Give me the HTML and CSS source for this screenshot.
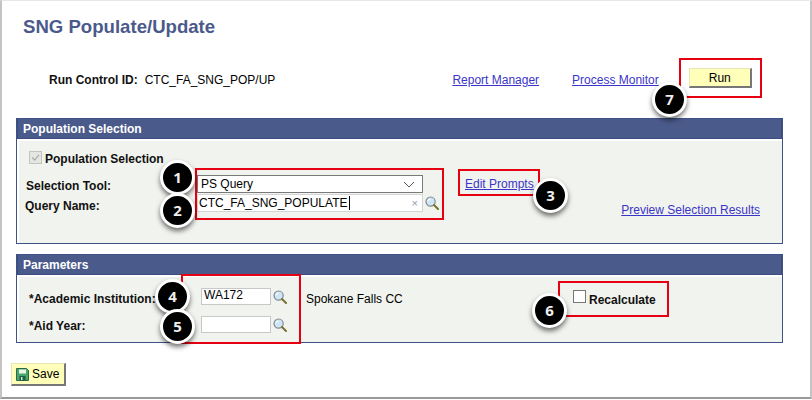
FILE: index.html
```html
<!DOCTYPE html>
<html lang="en">
<head>
<meta charset="utf-8">
<title>SNG Populate/Update</title>
<link rel="stylesheet" href="styles.css">
</head>
<body>
<svg class="defs" width="0" height="0" aria-hidden="true">
  <symbol id="lens" viewBox="0 0 14 14">
    <circle cx="5.6" cy="5.6" r="4.6" fill="#cfe5f6" stroke="#7f8a8f" stroke-width="1.2"/>
    <path d="M3 5.2A3 3 0 0 1 5.4 3" fill="none" stroke="#fff" stroke-width="1.2"/>
    <path d="M9 9l4 4" stroke="#77722c" stroke-width="2" stroke-linecap="round"/>
  </symbol>
</svg>
<main class="window">
  <h1 class="title">SNG Populate/Update</h1>
  <div class="run-row">
    <span class="label run-label low-2">Run Control ID:</span>
    <span class="run-id low-2">CTC_FA_SNG_POP/UP</span>
    <a class="link report-link low-2" href="#">Report Manager</a>
    <a class="link monitor-link low-2" href="#">Process Monitor</a>
    <button class="btn run-btn" type="button">Run</button>
  </div>

  <section class="panel panel-pop">
    <h2 class="panel-head">Population Selection</h2>
    <div class="panel-body pop-body">
      <div class="check-row">
        <span class="check check-on"><svg viewBox="0 0 13 13" width="11" height="11"><path d="M2.5 6.5l3 3 5-6" fill="none" stroke="#a9aca9" stroke-width="1.4"/></svg></span>
        <span class="label low-1">Population Selection</span>
      </div>
      <div class="field-row tool-row">
        <span class="label tool-label low-2">Selection Tool:</span>
        <div class="select">
          <span>PS Query</span>
          <svg class="chevron" viewBox="0 0 12 7" width="12" height="7"><path d="M1 1l5 5 5-5" fill="none" stroke="#555" stroke-width="1"/></svg>
        </div>
        <a class="link edit-link" href="#">Edit Prompts</a>
      </div>
      <div class="field-row query-row">
        <span class="label query-label low-3">Query Name:</span>
        <div class="query-input"><span class="query-text">CTC_FA_SNG_POPULATE</span><span class="clear">×</span></div>
        <svg class="lens" width="14" height="14"><use href="#lens"/></svg>
        <a class="link preview-link" href="#">Preview Selection Results</a>
      </div>
    </div>
  </section>

  <section class="panel panel-par">
    <h2 class="panel-head">Parameters</h2>
    <div class="panel-body par-body">
      <div class="field-row inst-row">
        <span class="label par-label low-2">*Academic Institution:</span>
        <div class="text-input">WA172</div>
        <svg class="lens" width="14" height="14"><use href="#lens"/></svg>
        <span class="inst-name low-2">Spokane Falls CC</span>
        <span class="check recalc-check"></span>
        <span class="label low-3">Recalculate</span>
      </div>
      <div class="field-row year-row">
        <span class="label par-label low-1">*Aid Year:</span>
        <div class="text-input"></div>
        <svg class="lens" width="14" height="14"><use href="#lens"/></svg>
      </div>
    </div>
  </section>

  <button class="btn save-btn" type="button">
    <svg viewBox="0 0 13 13" width="13" height="13"><path d="M.5.5h10l2 2v10H.5z" fill="#49a66a" stroke="#2c6b4a"/><path d="M3 1.500h7v4H3z" fill="#e8f4e6"/><path d="M3.500 8h6v4.500h-6z" fill="#1f5d42"/><path d="M5 9h1.500v3H5z" fill="#cfe8cf"/></svg>
    <span>Save</span>
  </button>
</main>

<div class="mark-box box-query"></div>
<div class="mark-box box-edit"></div>
<div class="mark-box box-run"></div>
<div class="mark-box box-par"></div>
<div class="mark-box box-recalc"></div>
<span class="marker m1">1</span>
<span class="marker m2">2</span>
<span class="marker m3">3</span>
<span class="marker m4">4</span>
<span class="marker m5">5</span>
<span class="marker m6">6</span>
<span class="marker m7">7</span>
</body>
</html>
```
FILE: styles.css
```css
* { box-sizing: border-box; }
html, body { margin: 0; height: 400px; overflow: hidden; background: #fff; }
body { position: relative; font: 12px/14px "Liberation Sans", Arial, sans-serif; color: #000; }
.defs { position: absolute; }
.window {
  width: 812px;
  height: 399px;
  padding: 16px 0 0 14px;
  border-top: 1px solid #e8e8e8;
  border-left: 2px solid #c4c4c4;
  border-right: 2px solid #c4c4c4;
  border-bottom: 2px solid #9a9a9a;
}
.title { margin: 0; font-size: 18.6px; line-height: 20px; font-weight: bold; color: #4b5a8b; padding-left: 7px; }
.label { font-weight: bold; color: #111; white-space: nowrap; }
.link { color: #3a35c8; text-decoration: underline; white-space: nowrap; }
.low-1 { padding-top: 2px; }
.low-2 { padding-top: 4px; }
.low-3 { padding-top: 6px; }
.run-row { display: flex; align-items: center; height: 20px; margin-top: 31px; padding-left: 33px; }
.run-id { margin-left: 7px; }
.report-link { margin-left: 177px; }
.monitor-link { margin-left: 33px; }
.btn {
  font: inherit; color: #000; padding: 0;
  background: #ffffb9;
  border: 1px solid #e6e6ba;
  border-right: 2px solid #777;
  border-bottom: 2px solid #777;
}
.run-btn { width: 63px; height: 20px; margin-left: 30px; padding-top: 1px; }
.panel { width: 767px; border: 1px solid #3f5288; }
.panel-pop { margin-top: 30px; height: 126px; }
.panel-par { margin-top: 10px; height: 89px; }
.panel-head {
  margin: 0; height: 20px; padding: 1px 0 0 5px;
  background: #4a5a8b; border: 1px solid #3b4c80; border-width: 0 1px 1px;
  color: #fff; font-size: 12px; line-height: 19px; font-weight: bold;
}
.panel-body { margin: 2px 0 0 2px; background: #f1f3ee; }
.pop-body { height: 102px; padding-top: 10px; }
.par-body { height: 65px; padding-top: 11px; }
.check { display: block; width: 13px; height: 13px; background: #fff; border: 1px solid #777; flex: none; }
.check-on { display: flex; align-items: center; justify-content: center; background: #e4e6e2; border-color: #c2c4c2; }
.check-row { display: flex; align-items: center; gap: 3px; height: 13px; padding-left: 10px; }
.field-row { display: flex; align-items: center; }
.tool-row { height: 18px; margin-top: 11px; padding-left: 7px; }
.tool-label { width: 171px; }
.select {
  display: flex; align-items: center; justify-content: space-between;
  width: 226px; height: 18px; padding: 0 7px 0 3px;
  background: #fff; border: 1px solid #7a7a7a;
}
.edit-link { margin-left: 42px; }
.query-row { height: 18px; margin-top: 1px; padding: 0 22px 0 6px; }
.query-label { width: 172px; }
.query-input {
  display: flex; align-items: center; justify-content: space-between;
  width: 226px; height: 18px; padding: 0 4px 0 1px;
  background: #fff; border: 1px solid #d4d4d4;
}
.query-text { border-right: 1px solid #000; padding-right: 1px; }
.clear { color: #8c9fb4; font-size: 11px; }
.lens { flex: none; margin-left: 2px; }
.preview-link { margin-left: auto; padding-top: 14px; }
.inst-row { height: 17px; padding-left: 10px; }
.year-row { height: 17px; margin-top: 11px; padding-left: 10px; }
.par-label { width: 172px; }
.text-input { width: 70px; height: 17px; padding: 0 2px; line-height: 13px; background: #fff; border: 1px solid #c8c8c8; }
.inst-name { margin-left: 19px; width: 267px; flex: none; }
.recalc-check { margin-right: 3px; }
.save-btn {
  display: flex; align-items: center; gap: 3px;
  width: 55px; height: 23px; margin: 20px 0 0 -5px; padding-left: 4px;
}
.mark-box { position: absolute; border: 2px solid #e60012; }
.box-query { left: 195px; top: 168px; width: 249px; height: 52px; }
.box-edit { left: 458px; top: 169px; width: 82px; height: 27px; }
.box-run { left: 679px; top: 58px; width: 83px; height: 40px; }
.box-par { left: 181px; top: 274px; width: 120px; height: 70px; }
.box-recalc { left: 558px; top: 281px; width: 111px; height: 36px; }
.marker {
  position: absolute; width: 35px; height: 35px;
  display: flex; align-items: center; justify-content: center;
  background: #000; border: 3px solid #fff; border-radius: 50%;
  box-shadow: 0 3px 5px rgba(0,0,0,.55);
  color: #eee; font: bold 15px/1 "Open Sans", sans-serif;
}
.m1 { left: 160px; top: 160px; }
.m2 { left: 160px; top: 193px; }
.m3 { left: 533px; top: 178px; }
.m4 { left: 155px; top: 279px; }
.m5 { left: 160px; top: 309px; }
.m6 { left: 532px; top: 293px; }
.m7 { left: 652px; top: 82px; }
```
